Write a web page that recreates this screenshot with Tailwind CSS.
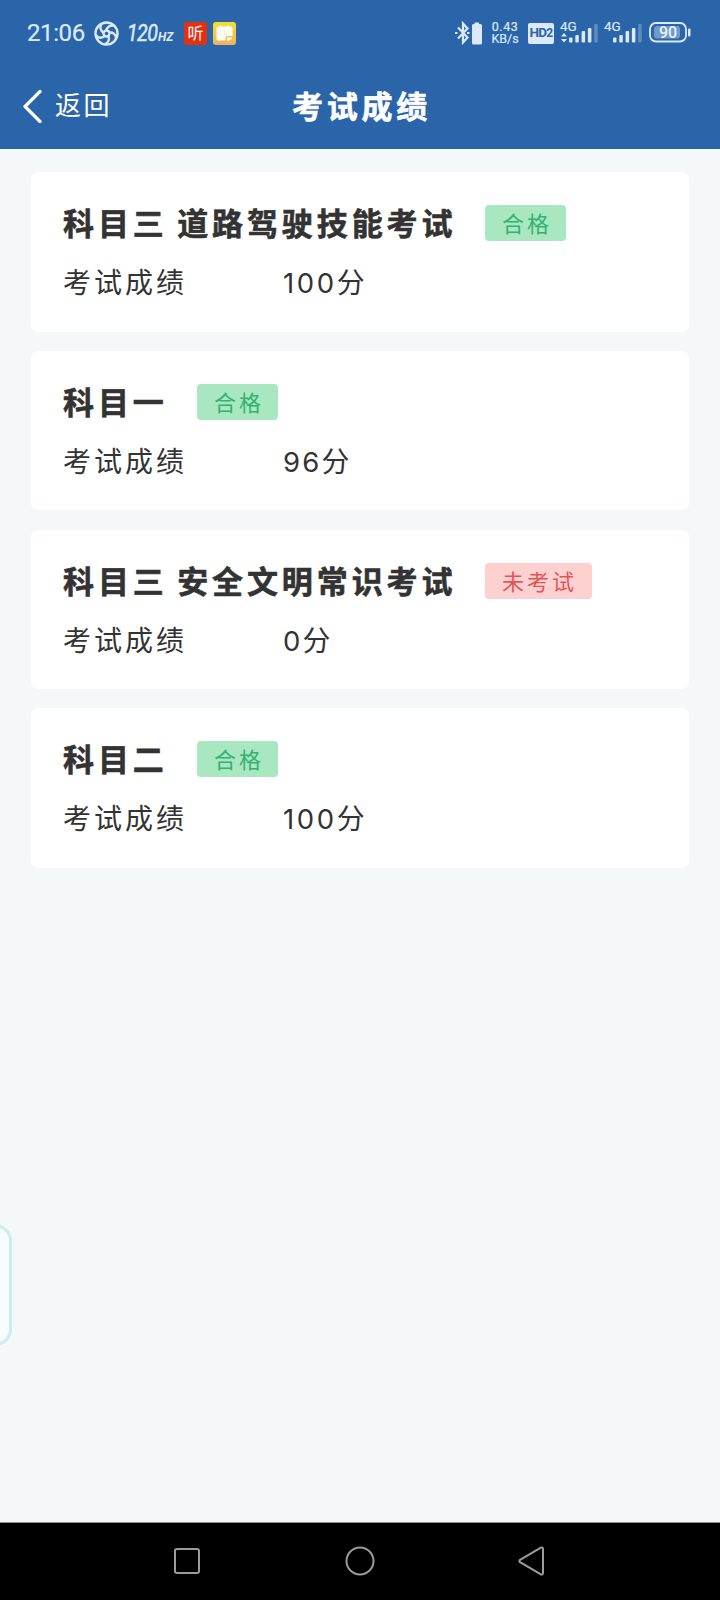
<!DOCTYPE html>
<html lang="zh-CN">
<head>
  <meta charset="UTF-8" />
  <title>考试成绩</title>
  <meta name="viewport" content="width=device-width, initial-scale=1" />
  <script src="https://cdn.jsdelivr.net/npm/@tailwindcss/browser@4"></script>
</head>
<body class="relative flex h-[1600px] w-[720px] flex-col overflow-hidden bg-[#f4f8f9] font-['Noto_Sans_CJK_SC',sans-serif] text-[#333333]">
  <header class="h-[149px] shrink-0 bg-[#2b65a9] text-white">
    <!-- status bar -->
    <div class="flex h-[66px] items-center pl-[27px] font-['Roboto',sans-serif] text-[#dbe9fb]">
      <span class="w-[67px] whitespace-nowrap text-[24px] leading-none tracking-[-0.4px] [-webkit-text-stroke:0.2px]">21:06</span>
      <svg class="size-[25px]" viewBox="0 0 25 25" fill="none" stroke="currentColor" stroke-width="2.400">
        <circle cx="12.5" cy="12.5" r="11" />
        <circle cx="12.5" cy="12.5" r="3" />
        <path id="blade" d="M12.5 9.500C13 6 16 4 20 4.800" />
        <use href="#blade" transform="rotate(72 12.500 12.500)" />
        <use href="#blade" transform="rotate(144 12.500 12.500)" />
        <use href="#blade" transform="rotate(216 12.500 12.500)" />
        <use href="#blade" transform="rotate(288 12.500 12.500)" />
      </svg>
      <span class="ml-[8px] flex w-[57px] items-baseline italic leading-none"><span class="w-[31px] origin-left scale-x-[0.82] whitespace-nowrap text-[24px] tracking-[-0.800px] [-webkit-text-stroke:0.5px]">120</span><span class="text-[12px] font-bold">HZ</span></span>
      <span class="flex size-[23px] items-center justify-center rounded-[3px] bg-[#e5300f] pb-[2px] font-['Noto_Sans_CJK_SC',sans-serif] text-[16px] leading-none text-white">听</span>
      <svg class="ml-[6px] size-[23px]" viewBox="0 0 23 23">
        <defs>
          <linearGradient id="note" x1="0" y1="0" x2="0" y2="1">
            <stop offset="0" stop-color="#f2e02c" />
            <stop offset="1" stop-color="#f1b060" />
          </linearGradient>
        </defs>
        <rect width="23" height="23" rx="3" fill="url(#note)" />
        <path d="M5 4.500H7V3.500H9V4.500H14V3.500H16V4.500H18Q19.500 4.500 19.500 6V14H14Q12.500 14 12.500 15.500V18.500H5Q3.500 18.500 3.500 17V6Q3.500 4.500 5 4.500Z" fill="#fffdf5" />
        <path d="M14 15.500H19.500Q18.500 18.500 14 19Z" fill="#fffdf5" />
        <path d="M7 9H8M11 9H12M15 9H16M7 12.500H8M11 12.500H12M15 12.500H16" stroke="#eedfae" />
      </svg>

      <svg class="ml-[219px] h-[24px] w-[28px]" viewBox="0 0 28 24" fill="none" stroke="currentColor" stroke-width="2.200">
        <path d="M3 6.500L12.500 16.500L8 21.500V2.500L12.500 7.500L3 17.500" />
        <path d="M0 12H2.500M12 12H14.500" />
        <path d="M17 4.500Q17 3 18.500 3H19.500V1.500H24V3H25.500Q27 3 27 4.500V22Q27 23.500 25.500 23.500H18.500Q17 23.500 17 22Z" fill="currentColor" stroke="none" />
      </svg>
      <span class="ml-[8px] w-[28px] whitespace-nowrap text-center text-[12.500px] leading-[12px] [-webkit-text-stroke:0.2px]"><span class="block tracking-[0.5px]">0.43</span><span class="block">KB/s</span></span>
      <span class="ml-[9px] flex h-[21px] w-[26px] items-center justify-center rounded-[2px] bg-[#dbe9fb] text-[13.500px] font-bold leading-none tracking-[-0.7px] text-[#2b65a9]">HD<span class="text-[12px]">2</span></span>
      <svg class="ml-[6px] h-[24px] w-[39px] overflow-visible" viewBox="0 0 39 24" fill="currentColor">
        <text x="0" y="10" font-size="13.500" stroke="currentColor" stroke-width=".2">4G</text>
        <path d="M1 15.500L4 12L7 15.500ZM1 18L4 21.500L7 18Z" />
        <rect x="9" y="16.500" width="3.500" height="5" rx="1" />
        <rect x="15.300" y="14" width="3.500" height="7.500" rx="1" />
        <rect x="21.600" y="10" width="3.500" height="11.500" rx="1" />
        <rect x="27.900" y="7" width="3.500" height="14.500" rx="1" />
        <rect x="34.200" y="3" width="3.500" height="18.500" rx="1" opacity=".3" />
      </svg>
      <svg class="ml-[5px] h-[24px] w-[39px] overflow-visible" viewBox="0 0 39 24" fill="currentColor">
        <text x="0" y="10" font-size="13.500" stroke="currentColor" stroke-width=".2">4G</text>
        <rect x="9" y="16.500" width="3.500" height="5" rx="1" />
        <rect x="15.300" y="14" width="3.500" height="7.500" rx="1" />
        <rect x="21.600" y="10" width="3.500" height="11.500" rx="1" />
        <rect x="27.900" y="7" width="3.500" height="14.500" rx="1" />
        <rect x="34.200" y="3" width="3.500" height="18.500" rx="1" opacity=".3" />
      </svg>
      <svg class="ml-[6px] h-[24px] w-[43px]" viewBox="0 0 43 24">
        <rect x="1" y="2" width="36" height="18.500" rx="6" fill="none" stroke="#dbe9fb" stroke-width="1.800" />
        <rect x="5" y="5" width="26" height="12.500" rx="3" fill="#6f9acb" />
        <rect x="39" y="7.500" width="2.500" height="8" rx="1" fill="#dbe9fb" />
        <text x="19" y="17" font-size="16" font-weight="500" text-anchor="middle" fill="#e8f1fd">90</text>
      </svg>
    </div>
    <!-- title bar -->
    <div class="grid h-[81px] grid-cols-3 items-center pb-[5px]">
      <a href="#" class="flex items-center pl-[22px] text-[26px] leading-none tracking-[2.600px]">
        <svg class="mr-[12px] mt-[3px] h-[34px] w-[21px]" viewBox="0 0 21 34" fill="none" stroke="currentColor" stroke-width="3.200" stroke-linecap="round" stroke-linejoin="round">
          <path d="M18 2.500L3 17.500L18 32.500" />
        </svg>
        返回
      </a>
      <h1 class="whitespace-nowrap pl-[3px] text-center text-[31px] font-bold leading-none tracking-[3.700px] [-webkit-text-stroke:0.6px]">考试成绩</h1>
    </div>
  </header>

  <main class="flex flex-1 flex-col gap-[19.400px] px-[31px] pt-[23.300px]">
    <section class="h-[159.300px] rounded-[7px] bg-white px-[32px] pt-[33px]">
      <div class="flex items-center whitespace-nowrap">
        <h2 class="-mt-[3px] w-[422px] shrink-0 text-[31px] font-bold leading-[37px] tracking-[3.900px] [word-spacing:-1.500px] [-webkit-text-stroke:0.6px]">科目三 道路驾驶技能考试</h2>
        <span class="h-[36px] rounded-[4px] bg-[#a9e7c0] pl-[17px] pr-[14px] text-[22px] leading-[34px] tracking-[3px] text-[#33b273]">合格</span>
      </div>
      <div class="mt-[20px] flex text-[28px] leading-[40px] tracking-[3px]">
        <span class="w-[220px]">考试成绩</span>
        <span><span class="font-['Inter',sans-serif] text-[27.500px] tracking-[2.600px]">100</span>分</span>
      </div>
    </section>

    <section class="h-[159.300px] rounded-[7px] bg-white px-[32px] pt-[33px]">
      <div class="flex items-center whitespace-nowrap">
        <h2 class="-mt-[3px] w-[134px] text-[31px] font-bold leading-[37px] tracking-[3.900px] [-webkit-text-stroke:0.6px]">科目一</h2>
        <span class="h-[36px] rounded-[4px] bg-[#a9e7c0] pl-[17px] pr-[14px] text-[22px] leading-[34px] tracking-[3px] text-[#33b273]">合格</span>
      </div>
      <div class="mt-[20px] flex text-[28px] leading-[40px] tracking-[3px]">
        <span class="w-[220px]">考试成绩</span>
        <span><span class="font-['Inter',sans-serif] text-[27.500px] tracking-[2.200px]">96</span>分</span>
      </div>
    </section>

    <section class="h-[159.300px] rounded-[7px] bg-white px-[32px] pt-[33px]">
      <div class="flex items-center whitespace-nowrap">
        <h2 class="-mt-[3px] w-[422px] shrink-0 text-[31px] font-bold leading-[37px] tracking-[3.900px] [word-spacing:-1.500px] [-webkit-text-stroke:0.6px]">科目三 安全文明常识考试</h2>
        <span class="h-[36px] rounded-[4px] bg-[#fed0d0] pl-[17px] pr-[15px] text-[22px] leading-[34px] tracking-[3px] text-[#e35555]">未考试</span>
      </div>
      <div class="mt-[20px] flex text-[28px] leading-[40px] tracking-[3px]">
        <span class="w-[220px]">考试成绩</span>
        <span><span class="font-['Inter',sans-serif] text-[27.500px] tracking-[2.200px]">0</span>分</span>
      </div>
    </section>

    <section class="h-[159.300px] rounded-[7px] bg-white px-[32px] pt-[33px]">
      <div class="flex items-center whitespace-nowrap">
        <h2 class="-mt-[3px] w-[134px] text-[31px] font-bold leading-[37px] tracking-[3.900px] [-webkit-text-stroke:0.6px]">科目二</h2>
        <span class="h-[36px] rounded-[4px] bg-[#a9e7c0] pl-[17px] pr-[14px] text-[22px] leading-[34px] tracking-[3px] text-[#33b273]">合格</span>
      </div>
      <div class="mt-[20px] flex text-[28px] leading-[40px] tracking-[3px]">
        <span class="w-[220px]">考试成绩</span>
        <span><span class="font-['Inter',sans-serif] text-[27.500px] tracking-[2.600px]">100</span>分</span>
      </div>
    </section>
  </main>

  <!-- side panel handle, floats over the page -->
  <div class="absolute left-[-30px] top-[1224px] h-[122px] w-[42px] rounded-[17px] border-[3px] border-[#cbedf1] bg-[#f8fcfd]"></div>

  <nav class="flex h-[78px] shrink-0 items-center border-t border-[#8e8e8e] bg-black pb-[1px] pl-[173px] text-[#9b9b9b]">
    <svg class="size-[28px]" viewBox="0 0 28 28" fill="none" stroke="currentColor" stroke-width="2">
      <rect x="2" y="2" width="24" height="24" rx="2" />
    </svg>
    <svg class="ml-[144px] size-[30px]" viewBox="0 0 30 30" fill="none" stroke="currentColor" stroke-width="2">
      <circle cx="15" cy="15" r="13.500" />
    </svg>
    <svg class="ml-[143px] h-[30px] w-[27px]" viewBox="0 0 27 30" fill="none" stroke="currentColor" stroke-width="2" stroke-linejoin="round">
      <path d="M2 13.800L22.500 1.800Q25 1 25 3V27Q25 29 22.500 28.200L2 16.200Q0.800 15 2 13.800Z" />
    </svg>
  </nav>
</body>
</html>
